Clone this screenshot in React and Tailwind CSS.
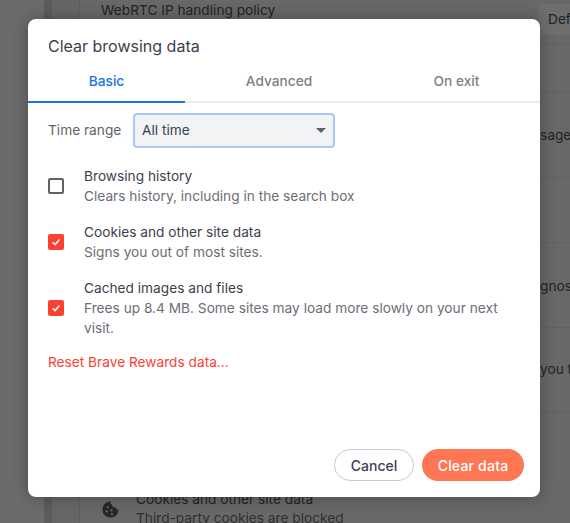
import React from 'react';

const items = [
  { title: 'Browsing history', sub: 'Clears history, including in the search box', checked: false },
  { title: 'Cookies and other site data', sub: 'Signs you out of most sites.', checked: true },
  { title: 'Cached images and files', sub: 'Frees up 8.4 MB. Some sites may load more slowly on your next visit.', checked: true },
];

const Checkbox = ({ checked }) => (
  checked ? (
    <div className="w-4 h-4 rounded-[2px] bg-[#fb4232] flex items-center justify-center shrink-0">
      <svg width="12" height="12" viewBox="0 0 12 12" fill="none">
        <path d="M2.6 6.3 L5 8.6 L9.5 3.6" stroke="#fff" strokeWidth="1.5" />
      </svg>
    </div>
  ) : (
    <div className="w-4 h-4 rounded-[2px] border-2 border-[#5f6368] shrink-0" />
  )
);

const Tab = ({ label, active, className }) => (
  <div className={`flex items-center justify-center text-[13.7px] font-medium ${active ? 'text-[#1a73e8] border-b-2 border-[#1a73e8]' : 'text-[#7d7f83]'} ${className}`}>
    {label}
  </div>
);

// rows of the settings page that sits behind the dialog
const Row = ({ className, children }) => (
  <div className={`shrink-0 border-b border-[#626262] flex items-center justify-end whitespace-nowrap ${className}`}>
    {children}
  </div>
);

const App = () => {
  return (
    <div className="relative w-[570px] h-[523px] overflow-hidden bg-[#676767] font-['Inter','Noto_Sans',sans-serif]">
      {/* page behind the dialog */}
      <div className="absolute inset-0 flex">
        <div className="w-[44px] shrink-0 bg-[#6b6b6b]" />
        <div className="w-[8px] shrink-0 bg-[#5c5c5c]" />
        <div className="w-[28px] shrink-0 bg-[#666666] border-r border-[#5f5f5f]" />
        <div className="w-[490px] shrink-0 flex flex-col bg-[#686868] text-[#232323] text-[13.7px] overflow-hidden">
          <div className="h-[44px] shrink-0 border-b border-[#626262] flex justify-between">
            <div className="pl-[21px] h-[21px] leading-[21px]">WebRTC IP handling policy</div>
            <div className="w-[31px] h-[31px] mt-[4px] bg-[#6e6e6e] pl-[9px] leading-[31px]">Def</div>
          </div>
          <Row className="h-[49px]" />
          <Row className="h-[85px]"><span className="w-[30px] pt-[1px]">sage</span></Row>
          <Row className="h-[65px]" />
          <Row className="h-[85px]"><span className="w-[30px] pt-[3px]">gnos</span></Row>
          <Row className="h-[84px]"><span className="w-[30px]">you t</span></Row>
          <div className="mt-[78px] shrink-0 flex items-center pl-[21px]">
            <svg className="shrink-0 mr-[16px]" width="19" height="19" viewBox="0 0 20 20">
              <path d="M10 1.5a8.5 8.5 0 1 0 8.5 8.5c-2 .3-3.4-.7-3.6-2.6-2 .2-3.6-1-3.6-3-1.2-.3-1.6-1.6-1.3-2.9z" fill="#26272b" />
              <circle cx="7" cy="7.5" r="1.2" fill="#676767" />
              <circle cx="6" cy="12" r="1.2" fill="#676767" />
              <circle cx="11" cy="11" r="1.2" fill="#676767" />
              <circle cx="11.5" cy="15" r="1.2" fill="#676767" />
            </svg>
            <div className="leading-[19px] whitespace-nowrap">
              <div>Cookies and other site data</div>
              <div className="text-[#2f2f2f]">Third-party cookies are blocked</div>
            </div>
          </div>
        </div>
      </div>

      {/* dialog */}
      <div className="absolute left-[28px] top-[19px] w-[512px] h-[478px] bg-white rounded-[8px] shadow-[0_0_16px_rgba(0,0,0,0.3)] flex flex-col text-[#3b3e4f]">
        <div className="px-5 pt-[17px] h-[43px] text-[16px] leading-[20px] text-[#3c3f4e]">Clear browsing data</div>
        <div className="flex h-[41px] border-b-2 border-[#eaeaea]">
          <Tab label="Basic" active className="w-[157px] h-[41px]" />
          <Tab label="Advanced" className="w-[188px]" />
          <Tab label="On exit" className="flex-1" />
        </div>
        <div className="flex items-center px-5 mt-[10px]">
          <span className="w-[85px] text-[13.7px] text-[#5f6368]">Time range</span>
          <div className="w-[202px] h-[35px] rounded-[4px] border-2 border-[#a8c7fa] bg-[#f1f3f4] flex items-center justify-between pl-[7px] pr-[7px] text-[13.7px] text-[#3c3f4e]">
            All time
            <svg width="10" height="5" viewBox="0 0 10 5"><path d="M0 0h10L5 5z" fill="#5f6368" /></svg>
          </div>
        </div>
        <div className="flex flex-col gap-[16px] mt-[18px] pl-5 pr-[24px]">
          {items.map(it => (
            <div key={it.title} className="flex items-center">
              <div className="w-[36px] flex"><Checkbox checked={it.checked} /></div>
              <div className="flex-1 text-[13.7px] leading-[20px]">
                <div className="text-[#3c3f4e]">{it.title}</div>
                <div className="text-[#6b6e76]">{it.sub}</div>
              </div>
            </div>
          ))}
        </div>
        <div className="px-5 mt-[14px] text-[13.7px] leading-[20px] text-[#fb4232]">Reset Brave Rewards data...</div>
        <div className="mt-auto flex justify-end gap-2 pr-4 pb-4">
          <button className="w-[80px] h-[32px] rounded-full border border-[#c9cbd6] bg-white text-[14px] font-medium text-[#3c3f4e]">Cancel</button>
          <button className="w-[102px] h-[32px] rounded-full bg-[#ff7654] text-[14px] font-medium tracking-[0.2px] text-white">Clear data</button>
        </div>
      </div>
    </div>
  );
};

export default App;
